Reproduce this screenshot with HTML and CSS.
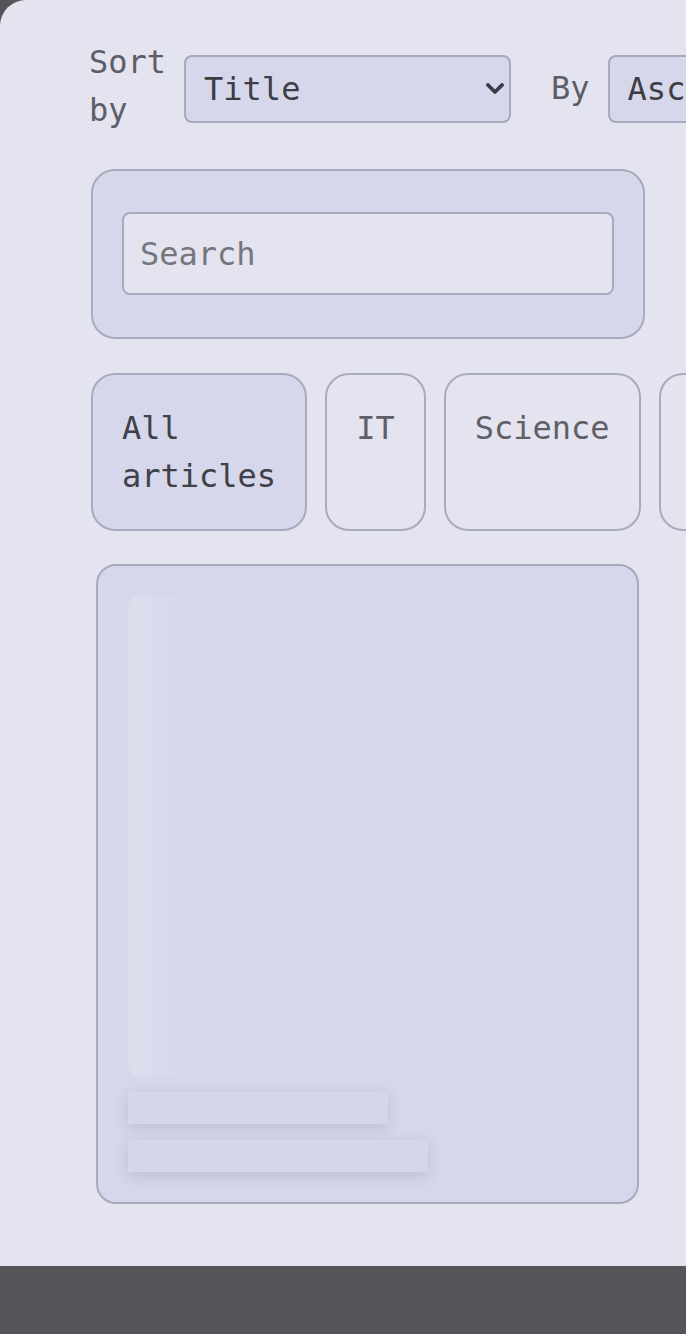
FILE: index.html
```html
<!DOCTYPE html>
<html lang="en">
<head>
<meta charset="utf-8">
<title>Articles</title>
<link rel="stylesheet" href="styles.css">
</head>
<body>
<main class="page">
  <div class="sort-row">
    <label class="sort-label" for="sort-field">Sort by</label>
    <div class="select-wrap">
      <select id="sort-field" class="select">
        <option>Title</option>
        <option>Date</option>
      </select>
      <svg class="chevron" width="18" height="12" viewBox="0 0 18 12"><path d="M2 2 L9 9 L16 2" fill="none" stroke="#3b3b42" stroke-width="3.8" stroke-linecap="round" stroke-linejoin="round"/></svg>
    </div>
    <label class="sort-label by-label" for="sort-dir">By</label>
    <div class="select-wrap">
      <select id="sort-dir" class="select">
        <option>Ascending</option>
        <option>Descending</option>
      </select>
      <svg class="chevron" width="18" height="12" viewBox="0 0 18 12"><path d="M2 2 L9 9 L16 2" fill="none" stroke="#3b3b42" stroke-width="3.8" stroke-linecap="round" stroke-linejoin="round"/></svg>
    </div>
  </div>

  <div class="search-box">
    <input class="search-input" type="text" placeholder="Search">
  </div>

  <div class="filters">
    <button class="filter active">All articles</button>
    <button class="filter">IT</button>
    <button class="filter">Science</button>
    <button class="filter">Technology</button>
  </div>

  <div class="card">
    <div class="skeleton-image"></div>
    <div class="skeleton-line line-short"></div>
    <div class="skeleton-line line-long"></div>
  </div>
</main>
</body>
</html>
```

FILE: styles.css
```css
html, body {
  margin: 0;
  padding: 0;
}

body {
  background: #545559;
  font-family: "DejaVu Sans Mono", "Liberation Mono", monospace;
  font-size: 32px;
  line-height: 48px;
  color: #404047;
}

.page {
  background: #e4e4f0;
  border-top-left-radius: 26px;
  padding: 38px 41px 62px 91px;
  display: flex;
  flex-direction: column;
  gap: 33px;
  box-sizing: border-box;
  width: 686px;
  height: 1266px;
}

.sort-row {
  display: flex;
  align-items: flex-start;
  gap: 18px;
  margin-left: -2px;
  margin-bottom: 2px;
  flex-shrink: 0;
}

.sort-label {
  color: #5d5d65;
  flex-shrink: 1;
}

.by-label {
  margin-left: 22px;
  margin-top: 26px;
}

.select-wrap {
  position: relative;
  flex-shrink: 0;
  margin-top: 17px;
}

.select {
  appearance: none;
  -webkit-appearance: none;
  width: 327px;
  height: 68px;
  box-sizing: border-box;
  padding: 0 18px;
  margin: 0;
  border: 2px solid #a9a9bc;
  border-radius: 8px;
  background: #d6d7ea;
  font: inherit;
  color: #3d3d44;
  display: block;
}

.chevron {
  position: absolute;
  right: 7px;
  top: 28px;
  pointer-events: none;
}

.search-box {
  background: #d6d7ea;
  border: 2px solid #aaaabe;
  border-radius: 24px;
  padding: 41px 29px 42px;
  margin-bottom: 1px;
  flex-shrink: 0;
}

.search-input {
  display: block;
  width: 100%;
  height: 83px;
  box-sizing: border-box;
  margin: 0;
  padding: 0 16px;
  border: 2px solid #aaaabe;
  border-radius: 8px;
  background: #e4e4f0;
  font: inherit;
  color: #3d3d44;
  outline: none;
}

.search-input::placeholder {
  color: #76767c;
}

.filters {
  display: flex;
  gap: 18px;
  flex-shrink: 0;
}

.filter {
  display: flex;
  align-items: flex-start;
  text-align: left;
  margin: 0;
  padding: 29px 29px 29px 29px;
  border: 2px solid #aaaabe;
  border-radius: 24px;
  background: transparent;
  font: inherit;
  line-height: 48px;
  color: #5f5f67;
  flex-shrink: 1;
}

.filter.active {
  background: #d6d7ea;
  color: #404048;
}

.card {
  margin: 0 6px 0 5px;
  background: #d6d7ea;
  border: 2px solid #a9a9bd;
  border-radius: 20px;
  padding: 30px;
  display: flex;
  flex-direction: column;
  gap: 16px;
  flex-shrink: 0;
}

.skeleton-image {
  height: 480px;
  border-radius: 12px;
  background: linear-gradient(90deg, rgba(236, 236, 244, 0.32) 0px, rgba(230, 230, 240, 0.16) 36px, rgba(214, 215, 234, 0) 76px), #d6d7ea;
}

.skeleton-line {
  height: 32px;
  background: #d5d6ea;
  box-shadow: 0 4px 14px rgba(90, 90, 130, 0.2);
}

.line-short {
  width: 260px;
}

.line-long {
  width: 300px;
}
```
